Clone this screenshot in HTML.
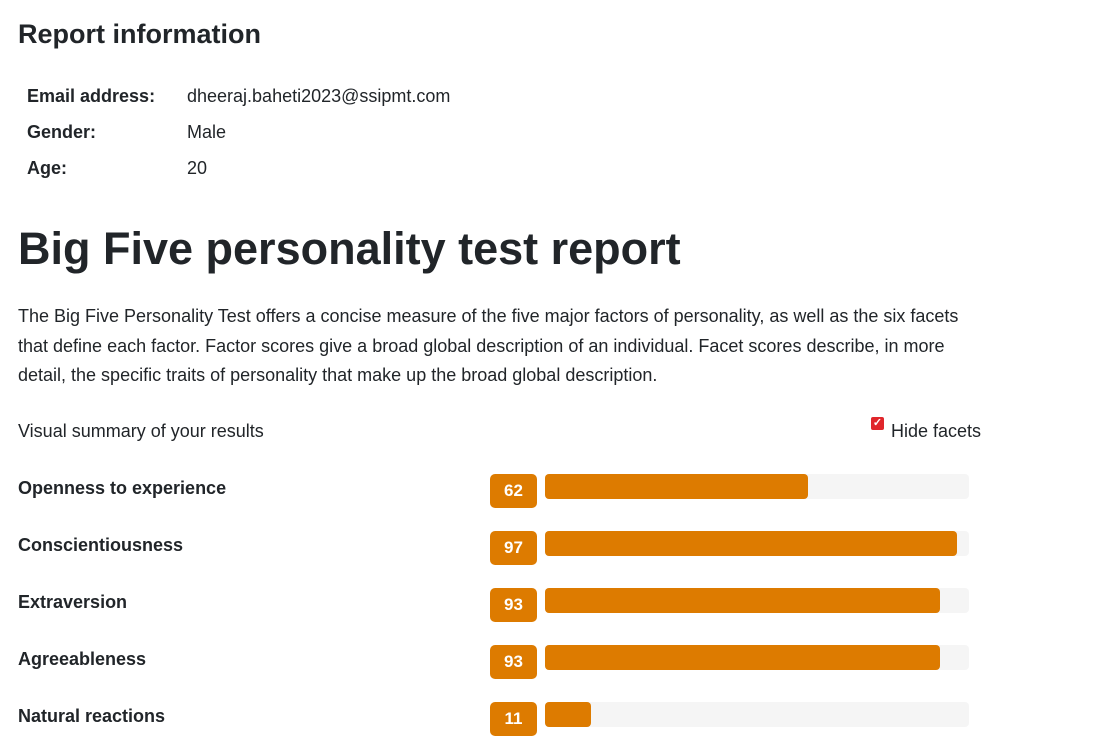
<!DOCTYPE html>
<html><head><meta charset="utf-8"><style>
body{margin:0;width:1110px;height:755px;overflow:hidden;background:#fff;font-family:"Liberation Sans",Arial,sans-serif;color:#212529;position:relative}
.a{position:absolute;white-space:nowrap}
h2{position:absolute;left:18px;top:18px;margin:0;font-size:27px;font-weight:bold;line-height:32px}
h1{position:absolute;left:18px;top:222px;margin:0;font-size:45px;font-weight:bold;line-height:54px}
.lbl{font-weight:bold;font-size:18px;left:27px}
.val{font-size:18px;left:187px}
p{position:absolute;left:18px;top:302px;width:965px;margin:0;font-size:18px;line-height:29.5px}
.f{font-weight:bold;font-size:18px;left:18px}
.b{position:absolute;left:490px;width:47px;height:34px;background:#dd7b00;border-radius:5px;color:#fff;font-weight:bold;font-size:17px;text-align:center;line-height:34px}
.t{position:absolute;left:545px;width:424px;height:25px;background:#f5f5f5;border-radius:4px}
.t i{display:block;height:25px;background:#dd7b00;border-radius:4px}
</style></head><body>
<h2>Report information</h2>
<div class="a lbl" style="top:86px">Email address:</div><div class="a val" style="top:86px">dheeraj.baheti2023@ssipmt.com</div>
<div class="a lbl" style="top:122px">Gender:</div><div class="a val" style="top:122px">Male</div>
<div class="a lbl" style="top:158px">Age:</div><div class="a val" style="top:158px">20</div>
<h1>Big Five personality test report</h1>
<p>The Big Five Personality Test offers a concise measure of the five major factors of personality, as well as the six facets that define each factor. Factor scores give a broad global description of an individual. Facet scores describe, in more detail, the specific traits of personality that make up the broad global description.</p>
<div class="a" style="left:18px;top:421px;font-size:18px">Visual summary of your results</div>
<div class="a" style="left:871px;top:417px;width:13px;height:13px;background:#e0262b;border-radius:2px;color:#fff;font-size:11px;line-height:13px;text-align:center;font-weight:bold">✓</div>
<div class="a" style="left:891px;top:421px;font-size:18px">Hide facets</div>

<div class="a f" style="top:478px">Openness to experience</div><div class="b" style="top:474px">62</div><div class="t" style="top:474px"><i style="width:263px"></i></div>
<div class="a f" style="top:535px">Conscientiousness</div><div class="b" style="top:531px">97</div><div class="t" style="top:531px"><i style="width:412px"></i></div>
<div class="a f" style="top:592px">Extraversion</div><div class="b" style="top:588px">93</div><div class="t" style="top:588px"><i style="width:395px"></i></div>
<div class="a f" style="top:649px">Agreeableness</div><div class="b" style="top:645px">93</div><div class="t" style="top:645px"><i style="width:395px"></i></div>
<div class="a f" style="top:706px">Natural reactions</div><div class="b" style="top:702px">11</div><div class="t" style="top:702px"><i style="width:46px"></i></div>
</body></html>
